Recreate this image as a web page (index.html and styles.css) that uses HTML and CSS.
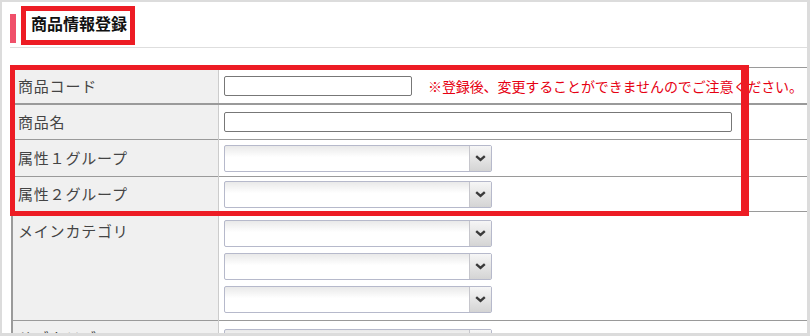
FILE: index.html
```html
<!DOCTYPE html>
<html lang="ja">
<head>
  <meta charset="UTF-8">
  <title>商品情報登録</title>
  <link rel="stylesheet" href="styles.css">
</head>
<body>
  <div class="frame">
    <div class="page-head">
      <h2>商品情報登録</h2>
    </div>

    <table class="form-table">
      <tr class="row-first">
        <th>商品コード</th>
        <td>
          <div class="field h35">
            <input type="text" class="text-short">
            <span class="note">※登録後、変更することができませんのでご注意ください。</span>
          </div>
        </td>
      </tr>
      <tr>
        <th>商品名</th>
        <td><div class="field h34"><input type="text" class="text-long"></div></td>
      </tr>
      <tr>
        <th>属性１グループ</th>
        <td>
          <div class="field h36">
            <div class="select"><span class="select-value"></span><span class="select-btn"><svg width="11" height="7" viewBox="0 0 11 7"><path d="M1.2 1.2 L5.5 5 L9.8 1.2" fill="none" stroke="#3a3a3a" stroke-width="2.4"/></svg></span></div>
          </div>
        </td>
      </tr>
      <tr>
        <th>属性２グループ</th>
        <td>
          <div class="field h34">
            <div class="select"><span class="select-value"></span><span class="select-btn"><svg width="11" height="7" viewBox="0 0 11 7"><path d="M1.2 1.2 L5.5 5 L9.8 1.2" fill="none" stroke="#3a3a3a" stroke-width="2.4"/></svg></span></div>
          </div>
        </td>
      </tr>
      <tr>
        <th class="th-top">メインカテゴリ</th>
        <td>
          <div class="field-list">
            <div class="select"><span class="select-value"></span><span class="select-btn"><svg width="11" height="7" viewBox="0 0 11 7"><path d="M1.2 1.2 L5.5 5 L9.8 1.2" fill="none" stroke="#3a3a3a" stroke-width="2.4"/></svg></span></div>
            <div class="select"><span class="select-value"></span><span class="select-btn"><svg width="11" height="7" viewBox="0 0 11 7"><path d="M1.2 1.2 L5.5 5 L9.8 1.2" fill="none" stroke="#3a3a3a" stroke-width="2.4"/></svg></span></div>
            <div class="select"><span class="select-value"></span><span class="select-btn"><svg width="11" height="7" viewBox="0 0 11 7"><path d="M1.2 1.2 L5.5 5 L9.8 1.2" fill="none" stroke="#3a3a3a" stroke-width="2.4"/></svg></span></div>
          </div>
        </td>
      </tr>
      <tr>
        <th class="th-top th-sub">サブカテゴリ</th>
        <td>
          <div class="field-list">
            <div class="select"><span class="select-value"></span><span class="select-btn"><svg width="11" height="7" viewBox="0 0 11 7"><path d="M1.2 1.2 L5.5 5 L9.8 1.2" fill="none" stroke="#3a3a3a" stroke-width="2.4"/></svg></span></div>
          </div>
        </td>
      </tr>
    </table>

    <!-- 注釈の赤枠 -->
    <div class="mark mark-title"></div>
    <div class="mark mark-table"></div>
  </div>
</body>
</html>
```

FILE: styles.css
```css
body {
  margin: 0;
  padding: 0;
  background-color: #fff;
  font-family: "Noto Sans CJK JP", "Liberation Sans", sans-serif;
  color: #333;
}
.frame {
  position: relative;
  box-sizing: border-box;
  width: 810px;
  height: 336px;
  border-style: solid;
  border-color: #dcdcdc;
  border-width: 2px 3px 3px 2px;
  overflow: hidden;
  background-color: #fff;
}
.page-head {
  margin: 12px 0 0 8px;
  padding-bottom: 4px;
  border-bottom: 1px solid #dedede;
}
.page-head h2 {
  margin: 0;
  height: 29px;
  border-left: 6px solid #f0506a;
  padding-left: 15px;
  font-size: 16px;
  font-weight: bold;
  line-height: 19px;
  color: #111;
}
.form-table {
  margin: 19px 0 0 9px;
  width: 796px;
  border-collapse: collapse;
  border-top: 1px solid #9a9a9a;
  border-left: 2px solid #9a9a9a;
}
.form-table tr {
  border-bottom: 1px solid #9a9a9a;
}
.form-table tr.row-first {
  border-bottom: 2px solid #9a9a9a;
}
.form-table th {
  width: 200px;
  padding: 0 0 0 5px;
  background-color: #f0f0f0;
  border-right: 1px solid #cccccc;
  text-align: left;
  vertical-align: middle;
  font-weight: normal;
  font-size: 15px;
  letter-spacing: 0.8px;
  line-height: 18px;
  color: #444;
}
.form-table th.th-top {
  vertical-align: top;
  padding-top: 10px;
}
.form-table th.th-sub {
  padding-top: 8px;
}
.form-table td {
  padding: 0 0 0 5px;
  vertical-align: top;
  line-height: 18px;
}
.field {
  display: flex;
  align-items: center;
}
.h34 {
  height: 34px;
}
.h35 {
  height: 35px;
}
.h36 {
  height: 36px;
}
.field-list {
  display: flex;
  flex-direction: column;
  gap: 6px;
  padding: 8px 0 7px;
}
input[type="text"] {
  box-sizing: border-box;
  height: 20px;
  margin: 0;
  border: 1px solid #777;
  border-radius: 2px;
  background-color: #fff;
}
.text-short {
  width: 188px;
}
.text-long {
  width: 508px;
}
.note {
  margin-left: 16px;
  font-size: 14px;
  letter-spacing: -0.1px;
  color: #e60012;
}
.select {
  display: flex;
  box-sizing: border-box;
  width: 268px;
  height: 27px;
  border: 1px solid #b6b9cb;
  border-radius: 2px;
  background: linear-gradient(#e9e9e9, #fff 45%);
}
.select-value {
  flex: 1;
}
.select-btn {
  display: flex;
  align-items: center;
  justify-content: center;
  width: 21px;
  border-left: 1px solid #c6c6cc;
  background: linear-gradient(#f6f6f6, #d4d4d4);
}
.mark {
  position: absolute;
  box-sizing: border-box;
  border: 5px solid #ed1c24;
}
.mark-title {
  left: 19px;
  top: 4px;
  width: 114px;
  height: 39px;
}
.mark-table {
  left: 8px;
  top: 63px;
  width: 739px;
  height: 151px;
  border-right-width: 8px;
}
```
